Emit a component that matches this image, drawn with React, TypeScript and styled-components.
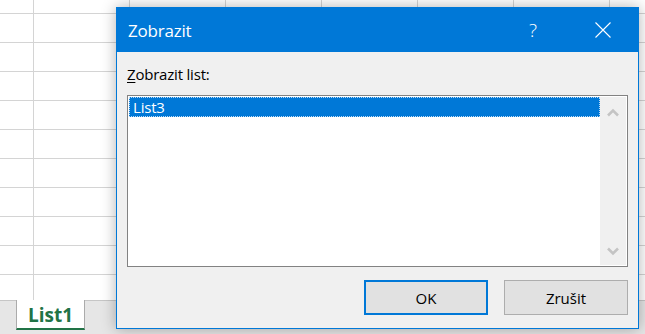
import React from "react";
import styled, { createGlobalStyle } from "styled-components";

const Global = createGlobalStyle`
  html, body { margin: 0; padding: 0; background: #ffffff; }
  body { font-family: "Open Sans", "Noto Sans", "Liberation Sans", sans-serif; }
  #root { width: 645px; height: 334px; overflow: hidden; }
`;

const Page = styled.div`
  position: relative;
  width: 645px;
  height: 334px;
  display: flex;
  flex-direction: column;
  overflow: hidden;
`;

const Sheet = styled.div`
  flex: 0 0 300px;
  background-color: #ffffff;
  background-image:
    repeating-linear-gradient(to right, transparent 0 33px, #d4d4d4 33px 34px, transparent 34px 96px),
    repeating-linear-gradient(to bottom, transparent 0 13px, #d4d4d4 13px 14px, transparent 14px 29px);
  background-size: 96px 29px, 96px 29px;
  background-position: 0 0, 0 0;
`;

const TabBar = styled.div`
  flex: 1;
  display: flex;
  align-items: stretch;
  background: #e6e6e6;
  border-top: 1px solid #c6c6c6;
  padding-left: 16px;
  box-sizing: border-box;
`;

const SheetTab = styled.div<{ $active?: boolean }>`
  width: 69px;
  height: 30px;
  margin-top: -1px;
  box-sizing: border-box;
  background: #ffffff;
  border-left: 1px solid #ababab;
  border-right: 1px solid #ababab;
  border-bottom: 2px solid #217346;
  display: flex;
  align-items: center;
  justify-content: center;
  color: #217346;
  font-weight: 700;
  font-size: 19px;
  padding-top: 2px;
`;

const Dialog = styled.div`
  position: absolute;
  left: 116px;
  top: 7px;
  width: 523px;
  height: 322px;
  box-sizing: border-box;
  background: #f0f0f0;
  border: 1px solid #0078d7;
  box-shadow: 0 0 14px rgba(0, 0, 0, 0.3);
  display: flex;
  flex-direction: column;
`;

const TitleBar = styled.div`
  height: 45px;
  flex: 0 0 45px;
  margin: -1px -1px 0;
  background: #0078d7;
  color: #ffffff;
  display: flex;
  align-items: center;
  padding-left: 12px;
  padding-right: 1px;
  padding-top: 1px;
  box-sizing: border-box;
`;

const Title = styled.div`
  flex: 1;
  font-size: 17px;
  letter-spacing: -0.2px;
`;

const TitleButton = styled.div`
  width: 70px;
  height: 45px;
  display: flex;
  align-items: center;
  justify-content: center;
  color: #ffffff;
  font-size: 19px;
  font-weight: 300;
`;

const Body = styled.div`
  flex: 1;
  display: flex;
  flex-direction: column;
  padding: 12px 10px 13px 10px;
`;

const Label = styled.div`
  font-size: 15px;
  color: #000000;
  line-height: 20px;
  margin-bottom: 11px;
  letter-spacing: -0.2px;
`;

const Underlined = styled.span`
  text-decoration: underline;
  text-underline-offset: 2px;
`;

const ListBox = styled.div`
  height: 172px;
  box-sizing: border-box;
  border: 1px solid #828282;
  background: #ffffff;
  display: flex;
  padding: 1px;
`;

const Items = styled.div`
  flex: 1;
  display: flex;
  flex-direction: column;
`;

const Item = styled.div<{ $selected?: boolean }>`
  height: 20px;
  box-sizing: border-box;
  background: ${(p) => (p.$selected ? "#0078d7" : "transparent")};
  color: ${(p) => (p.$selected ? "#ffffff" : "#000000")};
  border: 1px dotted ${(p) => (p.$selected ? "#b9dbf7" : "transparent")};
  font-size: 15px;
  line-height: 18px;
  padding-left: 3px;
  letter-spacing: -0.2px;
`;

const ScrollBar = styled.div`
  width: 26px;
  background: #f0f0f0;
  display: flex;
  flex-direction: column;
  justify-content: space-between;
  align-items: center;
  padding: 11px 0 9px;
  box-sizing: border-box;
`;

const Buttons = styled.div`
  margin-top: auto;
  display: flex;
  justify-content: flex-end;
  gap: 16px;
`;

const Button = styled.div<{ $default?: boolean }>`
  width: 124px;
  height: 35px;
  box-sizing: border-box;
  background: #e1e1e1;
  border: ${(p) => (p.$default ? "2px solid #0078d7" : "1px solid #adadad")};
  display: flex;
  align-items: center;
  justify-content: center;
  font-size: 15px;
  color: #000000;
`;

const Chevron = ({ up }: { up?: boolean }) => (
  <svg width="12" height="9" viewBox="0 0 12 9">
    <path
      d={up ? "M1 7.5 L6 2.5 L11 7.5" : "M1 1.5 L6 6.5 L11 1.5"}
      fill="none"
      stroke="#c4c4c4"
      strokeWidth="2.6"
    />
  </svg>
);

const CloseIcon = () => (
  <svg width="16" height="16" viewBox="0 0 16 16">
    <path d="M0.5 0.5 L15.5 15.5 M15.5 0.5 L0.5 15.5" stroke="#ffffff" strokeWidth="1.1" fill="none" />
  </svg>
);

export default function App() {
  return (
    <>
      <Global />
      <Page>
        <Sheet />
        <TabBar>
          <SheetTab $active>List1</SheetTab>
        </TabBar>
        <Dialog>
          <TitleBar>
            <Title>Zobrazit</Title>
            <TitleButton>?</TitleButton>
            <TitleButton>
              <CloseIcon />
            </TitleButton>
          </TitleBar>
          <Body>
            <Label>
              <Underlined>Z</Underlined>obrazit list:
            </Label>
            <ListBox>
              <Items>
                <Item $selected>List3</Item>
              </Items>
              <ScrollBar>
                <Chevron up />
                <Chevron />
              </ScrollBar>
            </ListBox>
            <Buttons>
              <Button $default>OK</Button>
              <Button>Zrušit</Button>
            </Buttons>
          </Body>
        </Dialog>
      </Page>
    </>
  );
}
